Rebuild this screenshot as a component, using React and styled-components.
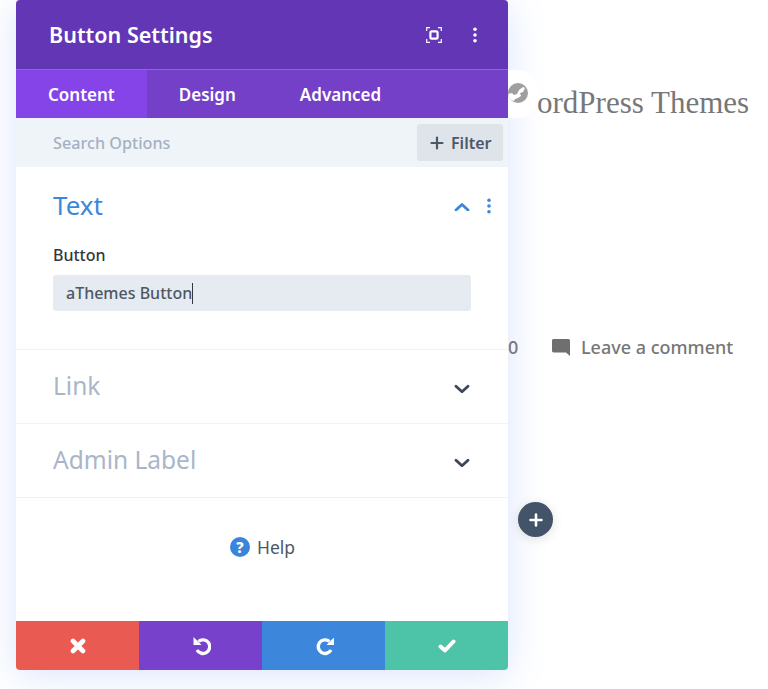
import React from 'react';
import styled, { createGlobalStyle } from 'styled-components';

const GlobalStyle = createGlobalStyle`
	html, body {
		margin: 0;
		height: 100%;
		background: #fff;
		overflow: hidden;
	}
	body {
		font-family: "Noto Sans", "Open Sans", sans-serif;
	}
`;

const Page = styled.div`
	display: flex;
	align-items: flex-start;
	width: 768px;
	height: 689px;
	padding-left: 16px;
	box-sizing: border-box;
	overflow: hidden;
`;

const Panel = styled.section`
	display: flex;
	flex-direction: column;
	flex: none;
	width: 492px;
	height: 670px;
	border-radius: 4px;
	background: #fff;
	box-shadow: 0 5px 38px rgba(70, 120, 235, 0.2);
	overflow: hidden;
`;

const Header = styled.header`
	display: flex;
	align-items: center;
	flex: none;
	box-sizing: border-box;
	height: 70px;
	padding: 0 31px 0 33px;
	background: #6236b5;
	border-bottom: 1px solid #8f63da;
`;

const Title = styled.h1`
	flex: 1;
	margin: 0;
	color: #fff;
	font-size: 21.5px;
	font-weight: 600;
	line-height: 69px;
`;

const HeaderTools = styled.div`
	display: flex;
	align-items: center;
	gap: 31px;
`;

const Tabs = styled.nav`
	display: flex;
	flex: none;
	height: 48px;
	background: #7540c8;
`;

const Tab = styled.div`
	padding: 0 32px;
	color: #fff;
	font-size: 17px;
	font-weight: 600;
	line-height: 49px;
	background: ${props => (props.$active ? '#8444e8' : 'transparent')};
`;

const SearchBar = styled.div`
	display: flex;
	align-items: center;
	justify-content: space-between;
	flex: none;
	box-sizing: border-box;
	height: 49px;
	padding: 0 5px 0 37px;
	background: #eff4f9;
`;

const SearchText = styled.span`
	color: #a5b1c2;
	font-size: 16.2px;
	font-weight: 500;
`;

const FilterButton = styled.div`
	display: flex;
	align-items: center;
	gap: 7px;
	box-sizing: border-box;
	width: 86px;
	height: 37px;
	padding-left: 13px;
	border-radius: 3px;
	background: #dfe3ea;
	color: #4c5866;
	font-size: 16px;
	font-weight: 600;
`;

const Section = styled.div`
	flex: none;
	box-sizing: border-box;
	height: ${props => props.$height}px;
	padding: 0 37px;
	border-bottom: 1px solid #eff2f6;
`;

const SectionHead = styled.div`
	display: flex;
	align-items: center;
	height: ${props => props.$height}px;
`;

const SectionTitle = styled.h2`
	flex: 1;
	margin: 0 0 ${props => (props.$open ? '0' : '3px')};
	color: ${props => (props.$open ? '#3d87db' : '#a9b6c9')};
	font-size: ${props => (props.$open ? '26px' : '24.5px')};
	font-weight: 400;
`;

const SectionIcons = styled.div`
	display: flex;
	align-items: center;
	gap: 17px;
	margin-top: 1px;
	margin-right: ${props => (props.$open ? '-20px' : '1px')};
`;

const FieldLabel = styled.div`
	margin-top: 1px;
	color: #32373c;
	font-size: 16px;
	font-weight: 500;
	line-height: 22px;
`;

const Input = styled.div`
	display: flex;
	align-items: center;
	box-sizing: border-box;
	width: 418px;
	height: 36px;
	margin-top: 9px;
	padding-left: 13px;
	border-radius: 3px;
	background: #e6eaf1;
	color: #4c5866;
	font-size: 16px;
	font-weight: 500;
`;

const Caret = styled.span`
	width: 1px;
	height: 21px;
	background: #32373c;
`;

const HelpRow = styled.div`
	display: flex;
	align-items: center;
	justify-content: center;
	flex: 1;
	gap: 7px;
	padding: 0 0 25px 1px;
	color: #4c5866;
	font-size: 17.5px;
	font-weight: 400;
`;

const HelpMark = styled.span`
	width: 20px;
	height: 20px;
	border-radius: 50%;
	background: #3a85dc;
	color: #fff;
	font-size: 15px;
	font-weight: 800;
	line-height: 20px;
	text-align: center;
`;

const Footer = styled.footer`
	display: grid;
	grid-template-columns: repeat(4, 1fr);
	flex: none;
	height: 49px;
`;

const FooterButton = styled.div`
	display: flex;
	align-items: center;
	justify-content: center;
	background: ${props => props.$bg};
`;

const Backdrop = styled.div`
	position: relative;
	z-index: 1;
	display: flex;
	flex-direction: column;
	flex: 1;
	min-width: 0;
`;

const LogoRow = styled.div`
	display: flex;
	align-items: flex-start;
	margin-top: 70px;
`;

const LogoBadge = styled.div`
	display: flex;
	align-items: center;
	flex: none;
	width: 32px;
	height: 48px;
	border-radius: 0 24px 24px 0;
	background: #fff;
`;

const LogoText = styled.span`
	margin: 15px 0 0 -3px;
	color: #777;
	font-family: "Liberation Serif", serif;
	font-size: 31px;
	line-height: 36px;
	white-space: nowrap;
`;

const MetaRow = styled.div`
	display: flex;
	align-items: center;
	margin-top: 213px;
	color: #777;
	font-size: 18px;
	font-weight: 500;
	line-height: 26px;
`;

const CommentCount = styled.span`
	width: 44px;
`;

const CommentLink = styled.span`
	margin-left: 11px;
	white-space: nowrap;
`;

const AddButton = styled.div`
	display: flex;
	align-items: center;
	justify-content: center;
	width: 35px;
	height: 35px;
	margin: 142px 0 0 10px;
	border-radius: 50%;
	background: #435368;
	box-shadow: 0 2px 12px rgba(0, 0, 0, 0.12);
`;

const Dots = ({ color }) => (
	<svg width="4" height="16" viewBox="0 0 4 16" fill={color}>
		<circle cx="2" cy="2.2" r="1.8" />
		<circle cx="2" cy="8" r="1.8" />
		<circle cx="2" cy="13.8" r="1.8" />
	</svg>
);

const FocusIcon = () => (
	<svg width="16" height="16" viewBox="0 0 16 16" fill="none" stroke="#fff" strokeWidth="1.2">
		<path d="M.7 4V.7H4M12 .7h3.3V4M15.3 12v3.3H12M4 15.3H.7V12" />
		<rect x="4.4" y="4.4" width="7.2" height="7.2" rx="1.4" strokeWidth="2.2" />
	</svg>
);

const Chevron = ({ up, color }) => (
	<svg width="16" height="10" viewBox="0 0 16 10" fill="none" stroke={color} strokeWidth="2.8" strokeLinecap="round" strokeLinejoin="round">
		<path d={up ? 'M2 9l6-5.6L14 9' : 'M2 3.2l6 5.6 6-5.6'} />
	</svg>
);

const Plus = ({ size, color, width }) => (
	<svg width={size} height={size} viewBox="0 0 14 14" fill="none" stroke={color} strokeWidth={width} strokeLinecap="round">
		<path d="M7 1.5v11M1.5 7h11" />
	</svg>
);

const CloseIcon = () => (
	<svg width="16" height="16" viewBox="0 0 16 16" fill="none" stroke="#fff" strokeWidth="4.6" strokeLinecap="round">
		<path d="M3 3l10 10M13 3L3 13" />
	</svg>
);

const UndoIcon = () => (
	<svg width="20" height="20" viewBox="-1.5 0.5 20 20" fill="none">
		<path d="M6 6a6.8 6.8 0 1 1-1.5 8.5" stroke="#fff" strokeWidth="3.4" />
		<path d="M1 1.5v8h8z" fill="#fff" />
	</svg>
);

const RedoIcon = () => (
	<svg width="20" height="20" viewBox="-1.5 0.5 20 20" fill="none">
		<path d="M14 6a6.8 6.8 0 1 0 1.5 8.5" stroke="#fff" strokeWidth="3.4" />
		<path d="M19 1.5v8h-8z" fill="#fff" />
	</svg>
);

const CheckIcon = () => (
	<svg width="18" height="14" viewBox="0 0 18 14" fill="none" stroke="#fff" strokeWidth="4" strokeLinecap="round" strokeLinejoin="round">
		<path d="M2.5 7.5L7 11.5 15.5 2.5" />
	</svg>
);

const GlobeIcon = () => (
	<svg width="20" height="22" viewBox="0 0 20 22">
		<circle cx="10" cy="10" r="10" fill="#9f9f9f" />
		<path d="M0 11l4-1 2 2 3-1 2-4 4-3 2 1-2 4-3 1 1 3-3 2-3 1-1 2-3-1-2-3z" fill="#fff" />
	</svg>
);

const CommentIcon = () => (
	<svg width="18" height="17" viewBox="0 0 18 17" fill="#6f6f6f">
		<path d="M1.5 0h15A1.5 1.5 0 0 1 18 1.5V17l-4-3.6H1.5A1.5 1.5 0 0 1 0 12V1.5A1.5 1.5 0 0 1 1.5 0z" />
	</svg>
);

const App = () => (
	<>
		<GlobalStyle />
		<Page>
			<Panel>
				<Header>
					<Title>Button Settings</Title>
					<HeaderTools>
						<FocusIcon />
						<Dots color="#fff" />
					</HeaderTools>
				</Header>
				<Tabs>
					<Tab $active>Content</Tab>
					<Tab>Design</Tab>
					<Tab>Advanced</Tab>
				</Tabs>
				<SearchBar>
					<SearchText>Search Options</SearchText>
					<FilterButton>
						<Plus size={14} color="#4c5866" width={2.2} />
						Filter
					</FilterButton>
				</SearchBar>
				<Section $height={183}>
					<SectionHead $height={76}>
						<SectionTitle $open>Text</SectionTitle>
						<SectionIcons $open>
							<Chevron up color="#3d87db" />
							<Dots color="#3d87db" />
						</SectionIcons>
					</SectionHead>
					<FieldLabel>Button</FieldLabel>
					<Input>
						aThemes Button
						<Caret />
					</Input>
				</Section>
				<Section $height={74}>
					<SectionHead $height={74}>
						<SectionTitle>Link</SectionTitle>
						<SectionIcons>
							<Chevron color="#3c4858" />
						</SectionIcons>
					</SectionHead>
				</Section>
				<Section $height={74}>
					<SectionHead $height={74}>
						<SectionTitle>Admin Label</SectionTitle>
						<SectionIcons>
							<Chevron color="#3c4858" />
						</SectionIcons>
					</SectionHead>
				</Section>
				<HelpRow>
					<HelpMark>?</HelpMark>
					Help
				</HelpRow>
				<Footer>
					<FooterButton $bg="#e95a52"><CloseIcon /></FooterButton>
					<FooterButton $bg="#7841cb"><UndoIcon /></FooterButton>
					<FooterButton $bg="#3c87db"><RedoIcon /></FooterButton>
					<FooterButton $bg="#4dc3a8"><CheckIcon /></FooterButton>
				</Footer>
			</Panel>
			<Backdrop>
				<LogoRow>
					<LogoBadge><GlobeIcon /></LogoBadge>
					<LogoText>ordPress Themes</LogoText>
				</LogoRow>
				<MetaRow>
					<CommentCount>0</CommentCount>
					<CommentIcon />
					<CommentLink>Leave a comment</CommentLink>
				</MetaRow>
				<AddButton>
					<Plus size={14} color="#fff" width={2.6} />
				</AddButton>
			</Backdrop>
		</Page>
	</>
);

export default App;
